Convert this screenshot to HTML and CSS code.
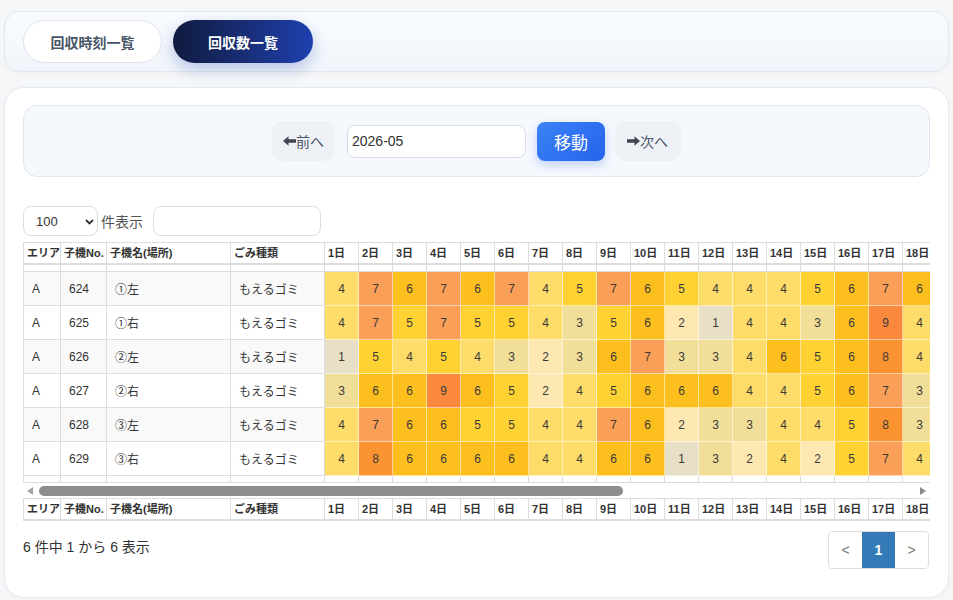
FILE: index.html
```html
<!DOCTYPE html>
<html lang="ja">
<head>
    <meta charset="UTF-8">
    <meta name="viewport" content="width=device-width, initial-scale=1.0">
    <title>回収数一覧</title>
    <link rel="stylesheet" href="styles.css">
</head>
<body>
    <div class="tab-bar">
        <a href="#" class="tab">回収時刻一覧</a>
        <a href="#" class="tab active">回収数一覧</a>
    </div>

    <div class="main-card">
        <form class="month-nav">
            <button type="button" class="month-btn prev">
                <svg width="13" height="10" viewBox="0 0 13 10"><path d="M0 5L5.5 0.3V3.3H13V6.7H5.5V9.7Z" fill="#3f4654"/></svg>前へ
            </button>
            <input type="text" class="month-input" value="2026-05">
            <button type="button" class="go-btn">移動</button>
            <button type="button" class="month-btn next">
                <svg width="13" height="10" viewBox="0 0 13 10"><path d="M13 5L7.5 0.3V3.3H0V6.7H7.5V9.7Z" fill="#3f4654"/></svg>次へ
            </button>
        </form>

        <div class="dt-top">
            <select class="dt-length">
                <option>100</option>
            </select>
            <span class="dt-length-label">件表示</span>
            <input type="search" class="dt-search">
        </div>

        <div class="dt-scroll-head">
            <table class="dt-table">
                <colgroup>
                    <col class="c-area"><col class="c-no"><col class="c-name"><col class="c-kind">
                    <col span="31" class="c-day">
                </colgroup>
                <thead>
                    <tr>
                        <th>エリア</th><th>子機No.</th><th>子機名(場所)</th><th>ごみ種類</th>
                        <th>1日</th><th>2日</th><th>3日</th><th>4日</th><th>5日</th><th>6日</th><th>7日</th><th>8日</th><th>9日</th><th>10日</th>
                        <th>11日</th><th>12日</th><th>13日</th><th>14日</th><th>15日</th><th>16日</th><th>17日</th><th>18日</th><th>19日</th><th>20日</th>
                        <th>21日</th><th>22日</th><th>23日</th><th>24日</th><th>25日</th><th>26日</th><th>27日</th><th>28日</th><th>29日</th><th>30日</th><th>31日</th>
                    </tr>
                </thead>
            </table>
        </div>

        <div class="dt-scroll-body">
            <table class="dt-table">
                <colgroup>
                    <col class="c-area"><col class="c-no"><col class="c-name"><col class="c-kind">
                    <col span="31" class="c-day">
                </colgroup>
                <tbody>
                    <tr class="spacer top">
                        <td></td><td></td><td></td><td></td>
                        <td></td><td></td><td></td><td></td><td></td><td></td><td></td><td></td><td></td><td></td>
                        <td></td><td></td><td></td><td></td><td></td><td></td><td></td><td></td><td></td><td></td>
                        <td></td><td></td><td></td><td></td><td></td><td></td><td></td><td></td><td></td><td></td><td></td>
                    </tr>
                    <tr>
                        <td>A</td><td>624</td><td>①左</td><td>もえるゴミ</td>
                        <td class="v4">4</td><td class="v7">7</td><td class="v6">6</td><td class="v7">7</td><td class="v6">6</td><td class="v7">7</td><td class="v4">4</td><td class="v5">5</td><td class="v7">7</td><td class="v6">6</td>
                        <td class="v5">5</td><td class="v4">4</td><td class="v4">4</td><td class="v4">4</td><td class="v5">5</td><td class="v6">6</td><td class="v7">7</td><td class="v6">6</td><td class="v5">5</td><td class="v4">4</td>
                        <td class="v6">6</td><td class="v7">7</td><td class="v5">5</td><td class="v4">4</td><td class="v3">3</td><td class="v5">5</td><td class="v6">6</td><td class="v7">7</td><td class="v4">4</td><td class="v5">5</td><td class="v6">6</td>
                    </tr>
                    <tr>
                        <td>A</td><td>625</td><td>①右</td><td>もえるゴミ</td>
                        <td class="v4">4</td><td class="v7">7</td><td class="v5">5</td><td class="v7">7</td><td class="v5">5</td><td class="v5">5</td><td class="v4">4</td><td class="v3">3</td><td class="v5">5</td><td class="v6">6</td>
                        <td class="v2">2</td><td class="v1">1</td><td class="v4">4</td><td class="v4">4</td><td class="v3">3</td><td class="v6">6</td><td class="v9">9</td><td class="v4">4</td><td class="v4">4</td><td class="v5">5</td>
                        <td class="v6">6</td><td class="v3">3</td><td class="v5">5</td><td class="v6">6</td><td class="v7">7</td><td class="v4">4</td><td class="v4">4</td><td class="v5">5</td><td class="v6">6</td><td class="v3">3</td><td class="v4">4</td>
                    </tr>
                    <tr>
                        <td>A</td><td>626</td><td>②左</td><td>もえるゴミ</td>
                        <td class="v1">1</td><td class="v5">5</td><td class="v4">4</td><td class="v5">5</td><td class="v4">4</td><td class="v3">3</td><td class="v2">2</td><td class="v3">3</td><td class="v6">6</td><td class="v7">7</td>
                        <td class="v3">3</td><td class="v3">3</td><td class="v4">4</td><td class="v6">6</td><td class="v5">5</td><td class="v6">6</td><td class="v8">8</td><td class="v4">4</td><td class="v6">6</td><td class="v5">5</td>
                        <td class="v4">4</td><td class="v4">4</td><td class="v7">7</td><td class="v5">5</td><td class="v3">3</td><td class="v2">2</td><td class="v5">5</td><td class="v6">6</td><td class="v5">5</td><td class="v4">4</td><td class="v4">4</td>
                    </tr>
                    <tr>
                        <td>A</td><td>627</td><td>②右</td><td>もえるゴミ</td>
                        <td class="v3">3</td><td class="v6">6</td><td class="v6">6</td><td class="v9">9</td><td class="v6">6</td><td class="v5">5</td><td class="v2">2</td><td class="v4">4</td><td class="v5">5</td><td class="v6">6</td>
                        <td class="v6">6</td><td class="v6">6</td><td class="v4">4</td><td class="v4">4</td><td class="v5">5</td><td class="v6">6</td><td class="v7">7</td><td class="v3">3</td><td class="v5">5</td><td class="v6">6</td>
                        <td class="v7">7</td><td class="v4">4</td><td class="v4">4</td><td class="v3">3</td><td class="v5">5</td><td class="v6">6</td><td class="v6">6</td><td class="v4">4</td><td class="v5">5</td><td class="v7">7</td><td class="v5">5</td>
                    </tr>
                    <tr>
                        <td>A</td><td>628</td><td>③左</td><td>もえるゴミ</td>
                        <td class="v4">4</td><td class="v7">7</td><td class="v6">6</td><td class="v6">6</td><td class="v5">5</td><td class="v5">5</td><td class="v4">4</td><td class="v4">4</td><td class="v7">7</td><td class="v6">6</td>
                        <td class="v2">2</td><td class="v3">3</td><td class="v3">3</td><td class="v4">4</td><td class="v4">4</td><td class="v5">5</td><td class="v8">8</td><td class="v3">3</td><td class="v4">4</td><td class="v4">4</td>
                        <td class="v5">5</td><td class="v6">6</td><td class="v3">3</td><td class="v5">5</td><td class="v6">6</td><td class="v7">7</td><td class="v5">5</td><td class="v4">4</td><td class="v3">3</td><td class="v6">6</td><td class="v5">5</td>
                    </tr>
                    <tr>
                        <td>A</td><td>629</td><td>③右</td><td>もえるゴミ</td>
                        <td class="v4">4</td><td class="v8">8</td><td class="v6">6</td><td class="v6">6</td><td class="v6">6</td><td class="v6">6</td><td class="v4">4</td><td class="v4">4</td><td class="v6">6</td><td class="v6">6</td>
                        <td class="v1">1</td><td class="v3">3</td><td class="v2">2</td><td class="v4">4</td><td class="v2">2</td><td class="v5">5</td><td class="v7">7</td><td class="v4">4</td><td class="v3">3</td><td class="v5">5</td>
                        <td class="v6">6</td><td class="v5">5</td><td class="v4">4</td><td class="v4">4</td><td class="v6">6</td><td class="v8">8</td><td class="v5">5</td><td class="v3">3</td><td class="v4">4</td><td class="v5">5</td><td class="v6">6</td>
                    </tr>
                    <tr class="spacer bottom">
                        <td></td><td></td><td></td><td></td>
                        <td></td><td></td><td></td><td></td><td></td><td></td><td></td><td></td><td></td><td></td>
                        <td></td><td></td><td></td><td></td><td></td><td></td><td></td><td></td><td></td><td></td>
                        <td></td><td></td><td></td><td></td><td></td><td></td><td></td><td></td><td></td><td></td><td></td>
                    </tr>
                </tbody>
            </table>
        </div>

        <div class="dt-scrollbar">
            <span class="sb-arrow left"></span>
            <span class="sb-track"><span class="sb-thumb"></span></span>
            <span class="sb-arrow right"></span>
        </div>

        <div class="dt-scroll-foot">
            <table class="dt-table">
                <colgroup>
                    <col class="c-area"><col class="c-no"><col class="c-name"><col class="c-kind">
                    <col span="31" class="c-day">
                </colgroup>
                <tfoot>
                    <tr>
                        <th>エリア</th><th>子機No.</th><th>子機名(場所)</th><th>ごみ種類</th>
                        <th>1日</th><th>2日</th><th>3日</th><th>4日</th><th>5日</th><th>6日</th><th>7日</th><th>8日</th><th>9日</th><th>10日</th>
                        <th>11日</th><th>12日</th><th>13日</th><th>14日</th><th>15日</th><th>16日</th><th>17日</th><th>18日</th><th>19日</th><th>20日</th>
                        <th>21日</th><th>22日</th><th>23日</th><th>24日</th><th>25日</th><th>26日</th><th>27日</th><th>28日</th><th>29日</th><th>30日</th><th>31日</th>
                    </tr>
                </tfoot>
            </table>
        </div>

        <div class="dt-bottom">
            <div class="dt-info">6 件中 1 から 6 表示</div>
            <ul class="pagination">
                <li><a href="#">&lt;</a></li>
                <li class="active"><a href="#">1</a></li>
                <li><a href="#">&gt;</a></li>
            </ul>
        </div>
    </div>
</body>
</html>
```

FILE: styles.css
```css
body {
    margin: 0;
    padding: 11px 4px 0;
    background: #f6f7f9;
    font-family: "Liberation Sans", Arial, "Noto Sans CJK JP", sans-serif;
    color: #333;
}

.tab-bar {
    display: flex;
    gap: 11px;
    padding: 8px 18px;
    border: 1px solid #e2e7ef;
    border-radius: 16px;
    background: linear-gradient(180deg, #f9fbfe 0%, #f1f5fb 100%);
    box-shadow: 0 2px 6px rgba(15, 23, 42, 0.03);
}

    .tab-bar .tab {
        width: 139px;
        height: 43px;
        box-sizing: border-box;
        display: flex;
        align-items: center;
        justify-content: center;
        border-radius: 22px;
        font-family: "Noto Sans CJK JP", sans-serif;
        font-size: 14px;
        font-weight: 700;
        text-decoration: none;
        color: #4a5568;
        background: #fff;
        border: 1px solid #dde3ec;
    }

        .tab-bar .tab.active {
            width: 140px;
            color: #fff;
            border: none;
            background: linear-gradient(90deg, #0f1b3f 0%, #1a2f7a 55%, #1e40af 100%);
            box-shadow: 0 6px 16px rgba(30, 64, 175, 0.28);
        }

.main-card {
    margin-top: 15px;
    padding: 17px 18px 28px;
    background: #fff;
    border: 1px solid #e5e9f0;
    border-radius: 20px;
    box-shadow: 0 2px 8px rgba(15, 23, 42, 0.03);
}

.month-nav {
    height: 72px;
    box-sizing: border-box;
    display: flex;
    align-items: center;
    justify-content: center;
    margin: 0;
    background: #f5f8fd;
    border: 1px solid #e1e7f0;
    border-radius: 14px;
}

    .month-nav .month-btn {
        height: 40px;
        display: flex;
        align-items: center;
        padding: 0 11px;
        border: none;
        border-radius: 10px;
        background: #eef1f6;
        font-family: inherit;
        font-size: 14px;
        color: #4a5568;
        cursor: pointer;
    }

        .month-nav .month-btn.next {
            padding: 0 13px 0 12px;
        }

    .month-nav .month-input {
        width: 179px;
        height: 33px;
        box-sizing: border-box;
        margin: 0 11px 0 12px;
        padding: 0 4px;
        border: 1px solid #d6dce6;
        border-radius: 8px;
        background: #fff;
        font-family: inherit;
        font-size: 14px;
        color: #333;
    }

    .month-nav .go-btn {
        width: 68px;
        height: 39px;
        margin-right: 10px;
        border: none;
        border-radius: 8px;
        background: linear-gradient(135deg, #3b82f6 0%, #2563eb 100%);
        box-shadow: 0 4px 10px rgba(37, 99, 235, 0.25);
        color: #fff;
        font-family: "Noto Sans CJK JP", sans-serif;
        font-size: 17px;
        cursor: pointer;
    }

.dt-top {
    display: flex;
    align-items: center;
    margin-top: 29px;
    margin-bottom: 6px;
}

    .dt-top .dt-length {
        width: 75px;
        height: 30px;
        padding: 0 0 0 12px;
        border: 1px solid #ddd;
        border-radius: 8px;
        background: #fff url("data:image/svg+xml,%3Csvg xmlns='http://www.w3.org/2000/svg' width='9' height='6' viewBox='0 0 9 6'%3E%3Cpath d='M1 1l3.5 3.5L8 1' stroke='%23333' stroke-width='1.8' fill='none'/%3E%3C/svg%3E") no-repeat 61px 12px;
        appearance: none;
        font-family: inherit;
        font-size: 13px;
        color: #333;
    }

    .dt-top .dt-length-label {
        margin: 0 10px 0 3px;
        font-size: 14px;
        color: #555;
    }

    .dt-top .dt-search {
        width: 168px;
        height: 30px;
        box-sizing: border-box;
        border: 1px solid #ddd;
        border-radius: 8px;
        background: #fff;
    }

.dt-scroll-head,
.dt-scroll-body,
.dt-scroll-foot {
    overflow: hidden;
}

.dt-scrollbar {
    display: flex;
    align-items: center;
    height: 15px;
    background: #fff;
}

    .dt-scrollbar .sb-arrow {
        width: 14px;
        display: flex;
        justify-content: center;
    }

        .dt-scrollbar .sb-arrow::before {
            content: "";
            border-top: 4.5px solid transparent;
            border-bottom: 4.5px solid transparent;
        }

        .dt-scrollbar .sb-arrow.left::before {
            border-right: 6px solid #a3a3a3;
        }

        .dt-scrollbar .sb-arrow.right::before {
            border-left: 6px solid #8a8a8a;
        }

    .dt-scrollbar .sb-track {
        flex: 1;
        padding: 3px 2px 2px;
    }

    .dt-scrollbar .sb-thumb {
        display: block;
        width: 584px;
        height: 10px;
        border-radius: 5px;
        background: #8d8d8d;
    }

.dt-table {
    width: 1356px;
    table-layout: fixed;
    border-collapse: separate;
    border-spacing: 0;
    border-left: 1px solid #ddd;
    font-size: 12px;
}

    .dt-table .c-area { width: 37px; }
    .dt-table .c-no { width: 46px; }
    .dt-table .c-name { width: 124px; }
    .dt-table .c-kind { width: 94px; }
    .dt-table .c-day { width: 34px; }

    .dt-table th {
        height: 12px;
        padding: 4px 3px;
        border-top: 1px solid #ddd;
        border-right: 1px solid #ddd;
        border-bottom: 2px solid #ddd;
        background: #fff;
        font-size: 11px;
        font-weight: 700;
        line-height: 12px;
        text-align: left;
        white-space: nowrap;
        overflow: hidden;
    }

    .dt-table td {
        height: 33px;
        padding: 0 8px;
        border-right: 1px solid #ddd;
        border-bottom: 1px solid #ddd;
        white-space: nowrap;
        overflow: hidden;
    }

    .dt-table tbody tr:nth-child(even) {
        background: #f9f9f9;
    }

    .dt-table tr.spacer td {
        height: 6px;
        padding: 0;
        background: #fff;
    }

    .dt-table td[class^="v"] {
        padding: 0;
        text-align: center;
        color: #3a3a3a;
        border-color: rgba(255, 255, 255, 0.55);
    }

    .dt-table td.v1 { background: #e8e0c6; }
    .dt-table td.v2 { background: #fee8b2; }
    .dt-table td.v3 { background: #f1df99; }
    .dt-table td.v4 { background: #fedc6a; }
    .dt-table td.v5 { background: #fed232; }
    .dt-table td.v6 { background: #fdbf1d; }
    .dt-table td.v7 { background: #fa9f57; }
    .dt-table td.v8 { background: #fb9430; }
    .dt-table td.v9 { background: #fa893d; }

.dt-bottom {
    display: flex;
    justify-content: space-between;
    align-items: flex-start;
    margin-top: 10px;
}

    .dt-bottom .dt-info {
        padding-top: 6px;
        font-size: 14px;
        line-height: 20px;
        color: #333;
    }

.pagination {
    display: flex;
    margin: 0 1px 0 0;
    padding: 0;
    list-style: none;
    border: 1px solid #ddd;
    border-radius: 4px;
    overflow: hidden;
}

    .pagination li a {
        display: flex;
        align-items: center;
        justify-content: center;
        width: 33px;
        height: 36px;
        font-size: 14px;
        color: #777;
        text-decoration: none;
        background: #fff;
    }

    .pagination li.active a {
        background: #337ab7;
        color: #fff;
        font-weight: 700;
    }
```
